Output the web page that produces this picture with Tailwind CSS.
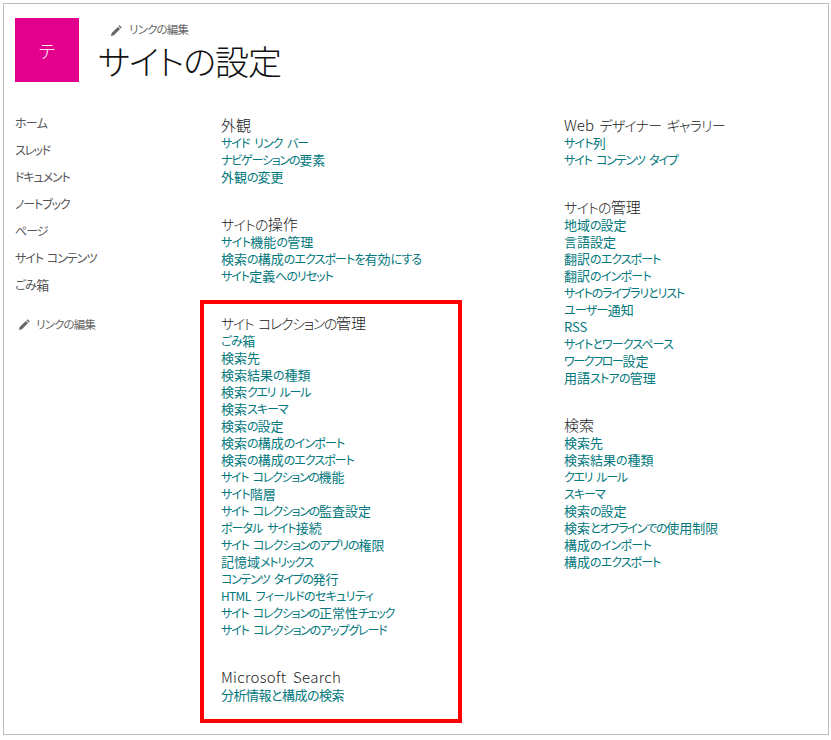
<!DOCTYPE html>
<html lang="ja">
<head>
<meta charset="utf-8">
<script src="https://cdn.jsdelivr.net/npm/@tailwindcss/browser@4"></script>
</head>
<body class="bg-white font-['Noto_Sans_CJK_JP','Noto_Sans',sans-serif] [font-feature-settings:'palt']">
<div class="w-[831px] h-[740px] pt-[3px] pl-[3px] pr-[2px] pb-[5px] overflow-hidden">
  <div class="w-[826px] h-[732px] border border-[#bcbcbc] pl-[11px] pt-[14px] text-[#444]">
    <header class="flex h-[64px]">
      <div class="w-[64px] h-[64px] bg-[#e3008c] text-white text-[18px] font-light flex items-center justify-center">テ</div>
      <div class="ml-[20px] mt-[2px]">
        <div class="ml-[11px] h-[20px] flex items-center gap-[6px] text-[11.5px] tracking-[-0.8px] text-[#666]">
          <svg class="w-[13px] h-[13px]" viewBox="0 0 13 13"><path fill="#666" d="M9.6 1.2l2.2 2.2-1.1 1.1-2.2-2.2zM7.9 2.9l2.2 2.2-6.2 6.2-3 .8.8-3z"/></svg>
          <span>リンクの編集</span>
        </div>
        <h1 class="text-[34px] leading-[42px] font-light tracking-[-1px] text-[#111] ml-[-1px]">サイトの設定</h1>
      </div>
    </header>
    <div class="flex mt-[27px]">
      <nav class="w-[206px] text-[12px] text-[#555] leading-[27px] [word-spacing:2px]">
        <div class="h-[27px] tracking-[-0.7px]">ホーム</div>
        <div class="h-[27px] tracking-[-1.4px]">スレッド</div>
        <div class="h-[27px] tracking-[-1.1px]">ドキュメント</div>
        <div class="h-[27px] tracking-[-1.1px]">ノートブック</div>
        <div class="h-[27px] tracking-[-1px]">ページ</div>
        <div class="h-[27px] tracking-[-1px]">サイト コンテンツ</div>
        <div class="h-[27px] tracking-[-0.5px]">ごみ<span class="text-[13px]">箱</span></div>
        <div class="mt-[13px] ml-[3px] flex items-center gap-[5px] text-[11.5px] tracking-[-0.8px] text-[#666]">
          <svg class="w-[13px] h-[13px]" viewBox="0 0 13 13"><path fill="#666" d="M9.6 1.2l2.2 2.2-1.1 1.1-2.2-2.2zM7.9 2.9l2.2 2.2-6.2 6.2-3 .8.8-3z"/></svg>
          <span>リンクの編集</span>
        </div>
      </nav>
      <main class="w-[343px] mt-[6px] text-[12px] leading-[17px] text-[#03787c] [word-spacing:3px] [&_div]:h-[17px] [&_b]:text-[13px] [&_b]:font-normal [&_b]:tracking-normal [&_h2]:h-[19px] [&_h2]:text-[14px] [&_h2]:leading-[19px] [&_h2]:text-[#222] [&_h2]:font-light [&_h2_b]:text-[15px] [&_h2_b]:font-light">
        <section class="h-[99px]">
          <h2><b>外観</b></h2>
          <div class="tracking-[-1px]">サイド リンク バー</div>
          <div class="tracking-[-1.2px]">ナビゲーションの<b>要素</b></div>
          <div class="tracking-[-1px]"><b>外観</b>の<b>変更</b></div>
        </section>
        <section class="h-[76px]">
          <h2 class="tracking-[-0.75px]">サイトの<b>操作</b></h2>
          <div class="tracking-[-0.6px]">サイト<b>機能</b>の<b>管理</b></div>
          <div class="tracking-[-0.9px]"><b>検索</b>の<b>構成</b>のエクスポートを<b>有効</b>にする</div>
          <div class="tracking-[-1px]">サイト<b>定義</b>へのリセット</div>
        </section>
        <div class="w-[262px] !h-[423px] -ml-[21px] border-[4px] border-[#ff0000] pl-[17px] pt-[9px] mt-[10px]">
          <section class="h-[345px]">
            <h2 class="tracking-[-1.35px]">サイト コレクションの<b>管理</b></h2>
            <div class="tracking-[-0.5px]">ごみ<b>箱</b></div>
            <div><b>検索先</b></div>
            <div><b>検索結果</b>の<b>種類</b></div>
            <div class="tracking-[-1.3px]"><b>検索</b>クエリ ルール</div>
            <div class="tracking-[-1px]"><b>検索</b>スキーマ</div>
            <div class="tracking-[-1px]"><b>検索</b>の<b>設定</b></div>
            <div class="tracking-[-0.8px]"><b>検索</b>の<b>構成</b>のインポート</div>
            <div class="tracking-[-0.95px]"><b>検索</b>の<b>構成</b>のエクスポート</div>
            <div class="tracking-[-1.3px]">サイト コレクションの<b>機能</b></div>
            <div class="tracking-[-0.8px]">サイト<b>階層</b></div>
            <div class="tracking-[-1.25px]">サイト コレクションの<b>監査設定</b></div>
            <div class="tracking-[-0.9px]">ポータル サイト<b>接続</b></div>
            <div class="tracking-[-1.2px]">サイト コレクションのアプリの<b>権限</b></div>
            <div class="tracking-[-1.15px]"><b>記憶域</b>メトリックス</div>
            <div class="tracking-[-1.25px]">コンテンツ タイプの<b>発行</b></div>
            <div class="tracking-[-0.65px]">HTML フィールドのセキュリティ</div>
            <div class="tracking-[-1.25px]">サイト コレクションの<b>正常性</b>チェック</div>
            <div class="tracking-[-1.15px]">サイト コレクションのアップグレード</div>
          </section>
          <section class="mt-[9px]">
            <h2 class="!text-[15px] tracking-[0.3px]">Microsoft Search</h2>
            <div class="text-[13px] tracking-[-0.5px]">分析情報と構成の検索</div>
          </section>
        </div>
      </main>
      <aside class="flex-1 mt-[6px] text-[12px] leading-[17px] text-[#03787c] [word-spacing:3px] [&_div]:h-[17px] [&_b]:text-[13px] [&_b]:font-normal [&_b]:tracking-normal [&_h2]:h-[19px] [&_h2]:text-[14px] [&_h2]:leading-[19px] [&_h2]:text-[#222] [&_h2]:font-light [&_h2_b]:text-[15px] [&_h2_b]:font-light">
        <section class="h-[82px]">
          <h2 class="tracking-[-0.75px]"><b>Web</b> デザイナー ギャラリー</h2>
          <div class="tracking-[-0.8px]">サイト<b>列</b></div>
          <div class="tracking-[-1.2px]">サイト コンテンツ タイプ</div>
        </section>
        <section class="h-[218px]">
          <h2 class="tracking-[-0.75px]">サイトの<b>管理</b></h2>
          <div class="tracking-[-1px]"><b>地域</b>の<b>設定</b></div>
          <div><b>言語設定</b></div>
          <div class="tracking-[-0.93px]"><b>翻訳</b>のエクスポート</div>
          <div class="tracking-[-0.75px]"><b>翻訳</b>のインポート</div>
          <div class="tracking-[-1.14px]">サイトのライブラリとリスト</div>
          <div class="tracking-[-0.75px]">ユーザー<b>通知</b></div>
          <div><b>RSS</b></div>
          <div class="tracking-[-0.9px]">サイトとワークスペース</div>
          <div class="tracking-[-1.4px]">ワークフロー<b>設定</b></div>
          <div class="tracking-[-0.75px]"><b>用語</b>ストアの<b>管理</b></div>
        </section>
        <section>
          <h2><b>検索</b></h2>
          <div><b>検索先</b></div>
          <div><b>検索結果</b>の<b>種類</b></div>
          <div class="tracking-[-1.35px]">クエリ ルール</div>
          <div class="tracking-[-1px]">スキーマ</div>
          <div class="tracking-[-1px]"><b>検索</b>の<b>設定</b></div>
          <div class="tracking-[-1.2px]"><b>検索</b>とオフラインでの<b>使用制限</b></div>
          <div class="tracking-[-0.75px]"><b>構成</b>のインポート</div>
          <div class="tracking-[-0.93px]"><b>構成</b>のエクスポート</div>
        </section>
      </aside>
    </div>
  </div>
</div>
</body>
</html>
